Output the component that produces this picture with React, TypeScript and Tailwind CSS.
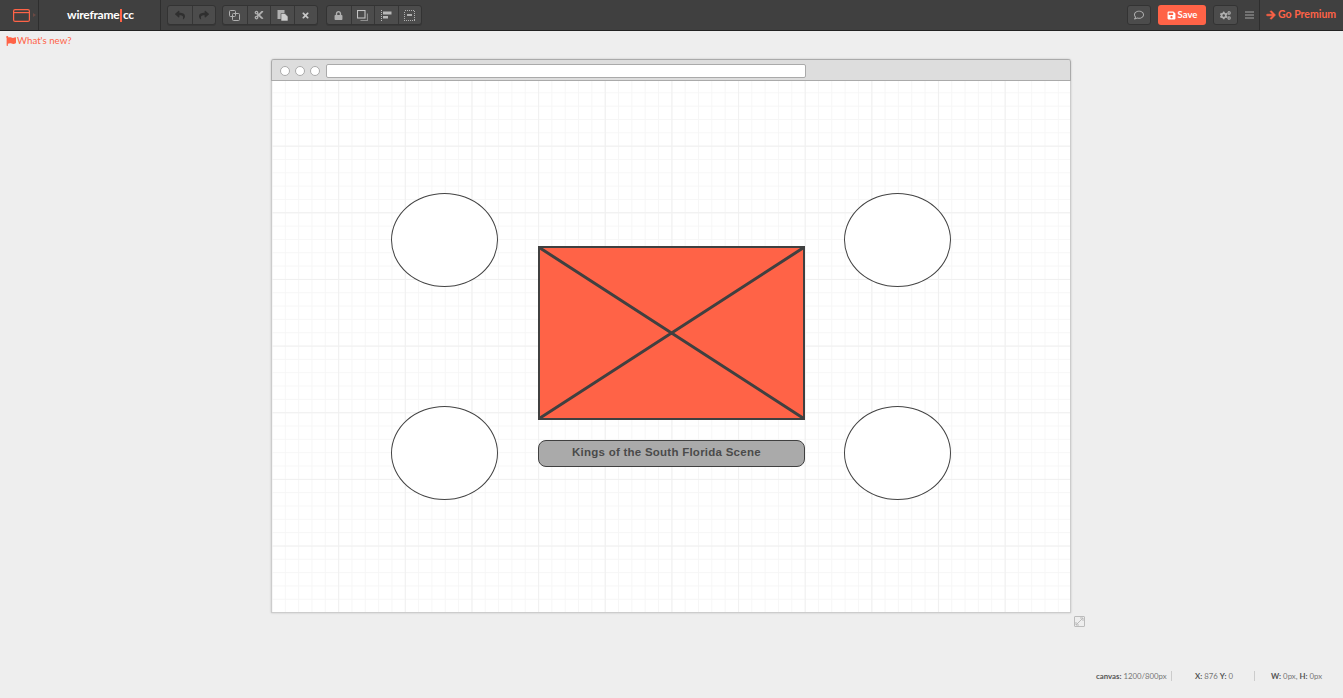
import { FaReply, FaShare, FaCut, FaTimes, FaLock, FaRegComment, FaSave, FaCogs, FaArrowRight, FaFlag } from "react-icons/fa";
import type { ReactNode } from "react";

function Group({ items }: { items: ReactNode[] }) {
  return (
    <div className="flex h-[20px] rounded-[3px] border border-[#333] bg-[#4c4c4c] shadow-[0_1px_0_#383838]">
      {items.map((it, i) => (
        <div key={i} className={"flex w-[23.5px] items-center justify-center text-[#b0b0b0] " + (i > 0 ? "border-l border-[#363636]" : "")}>
          {it}
        </div>
      ))}
    </div>
  );
}

function Copy() {
  return (
    <svg width="11" height="11" viewBox="0 0 11 11" fill="none" stroke="#b0b0b0" strokeWidth="1">
      <rect x="0.5" y="0.5" width="6" height="6" rx="1" />
      <rect x="3.5" y="3.5" width="7" height="7" rx="1" />
    </svg>
  );
}
function Paste() {
  return (
    <svg width="11" height="11" viewBox="0 0 11 11">
      <rect x="0.5" y="0" width="7" height="9" fill="#b0b0b0" />
      <path d="M4 3.5h4l3 3V11H4z" fill="#cfcfcf" stroke="#4c4c4c" strokeWidth="0.6" />
    </svg>
  );
}
function Forward() {
  return (
    <svg width="11" height="11" viewBox="0 0 11 11" fill="none">
      <rect x="0.5" y="0.5" width="7.5" height="7.5" stroke="#c4c4c4" strokeWidth="1.1" />
      <path d="M10.5 3.5v7h-7" stroke="#8f8f8f" strokeWidth="1.2" />
    </svg>
  );
}
function Align() {
  return (
    <svg width="11" height="11" viewBox="0 0 11 11" fill="#b8b8b8">
      <path d="M0.5 0v11" stroke="#b8b8b8" strokeDasharray="1 1" />
      <rect x="2" y="1.5" width="8.5" height="3" />
      <rect x="2" y="6" width="5" height="2.5" />
    </svg>
  );
}
function SelectIcon() {
  return (
    <svg width="11" height="11" viewBox="0 0 11 11" fill="none" shapeRendering="crispEdges">
      <rect x="0.5" y="0.5" width="10" height="10" stroke="#b0b0b0" strokeDasharray="1 1" />
      <rect x="3" y="4" width="5" height="2" fill="#b0b0b0" />
    </svg>
  );
}
function Burger() {
  return (
    <svg width="9" height="8" viewBox="0 0 9 8" stroke="#a5a5a5" strokeWidth="1">
      <path d="M0 1h9M0 4h9M0 7h9" />
    </svg>
  );
}
function WindowIcon() {
  return (
    <svg width="17" height="13" viewBox="0 0 17 13" fill="none" stroke="#ff6347" strokeWidth="1.2">
      <rect x="0.6" y="0.6" width="15.8" height="11.8" rx="1.5" />
      <path d="M1 3.6h15" />
    </svg>
  );
}
function Ellipse({ pos }: { pos: string }) {
  return <div className={"absolute h-[94px] w-[107px] rounded-[50%] border border-[#444] bg-white " + pos} />;
}
function Dot() {
  return <div className="h-[10px] w-[10px] rounded-full border border-[#aaa] bg-white" />;
}

export default function App() {
  return (
    <div className="flex h-[698px] w-[1343px] flex-col overflow-hidden bg-[#eee] font-['Lato','Open_Sans',sans-serif]">
      <header className="flex h-[31px] shrink-0 items-stretch border-b border-[#222] bg-[#404040]">
        <div className="flex w-[39px] items-center border-r border-[#2e2e2e] pl-[13px]">
          <WindowIcon />
          <span className="ml-[3px] h-0 w-0 border-y-[2px] border-l-[3px] border-y-transparent border-l-[#6b4a44]" />
        </div>
        <div className="flex w-[122px] items-center justify-center border-r border-[#2e2e2e] pl-[2px] text-[12px] font-bold tracking-[-0.25px] text-white">
          wireframe<span className="mx-px h-[13px] w-[1.5px] bg-[#ff6347]" />cc
        </div>
        <div className="flex items-center pl-[6px]">
          <Group items={[<FaReply key="a" size={10} color="#2f2f2f" />, <FaShare key="b" size={10} color="#2f2f2f" />]} />
          <div className="ml-[6px]">
            <Group items={[<Copy key="a" />, <FaCut key="b" size={10} />, <Paste key="c" />, <FaTimes key="d" size={9} color="#c8c8c8" />]} />
          </div>
          <div className="ml-[8px]">
            <Group items={[<FaLock key="a" size={9} />, <Forward key="b" />, <Align key="c" />, <SelectIcon key="d" />]} />
          </div>
        </div>
        <div className="ml-auto flex items-center">
          <div className="flex h-[20px] w-[24px] items-center justify-center rounded-[3px] border border-[#333] bg-[#4c4c4c] text-[#b0b0b0]">
            <FaRegComment size={10} />
          </div>
          <div className="ml-[7px] flex h-[20px] w-[48px] items-center justify-center gap-[2px] rounded-[3px] bg-[#ff6347] text-[9.5px] font-bold text-white">
            <FaSave size={9} />
            Save
          </div>
          <div className="ml-[7px] flex h-[20px] w-[25px] items-center justify-center rounded-[3px] border border-[#333] bg-[#4c4c4c] text-[#b0b0b0]">
            <FaCogs size={11} />
          </div>
          <div className="ml-[7px] flex w-[14px]">
            <Burger />
          </div>
        </div>
        <div className="flex w-[84px] items-center gap-[2px] border-l border-[#2e2e2e] pl-[6px] text-[10.5px] font-bold text-[#ff6347]">
          <FaArrowRight size={10} stroke="currentColor" strokeWidth={30} />
          Go Premium
        </div>
      </header>

      <div className="flex h-[20px] shrink-0 items-center gap-px pl-[6px] text-[9.7px] leading-none text-[#ff6347]">
        <FaFlag size={10} />
        What's new?
      </div>

      <div className="ml-[271px] mt-[8px] h-[554px] w-[800px] rounded-t-[3px] border border-[#ccc] border-t-[#aaa] bg-white shadow-[0_0_2px_#bbb]">
        <div className="-mx-px flex h-[21px] items-center gap-[5px] rounded-t-[2px] border-x border-b border-[#aaa] bg-[#ddd] pl-2 pt-[2px]">
          <Dot />
          <Dot />
          <Dot />
          <div className="ml-[1px] h-[14px] w-[480px] rounded-[2px] border border-[#aaa] bg-white" />
        </div>
        <div className="relative h-[531px] overflow-hidden bg-[linear-gradient(to_right,#f0f0f0_1px,transparent_1px),linear-gradient(to_bottom,#f0f0f0_1px,transparent_1px),linear-gradient(to_right,#f6f6f6_1px,transparent_1px),linear-gradient(to_bottom,#f6f6f6_1px,transparent_1px)] bg-size-[66.667px_66.667px,66.667px_66.667px,13.333px_13.333px,13.333px_13.333px] [background-position:-0.5px_-2px]">
          <Ellipse pos="left-[119px] top-[112px]" />
          <Ellipse pos="left-[572px] top-[112px]" />
          <Ellipse pos="left-[119px] top-[325px]" />
          <Ellipse pos="left-[572px] top-[325px]" />
          <div className="absolute left-[266px] top-[165px] h-[174px] w-[267px] border-2 border-[#404040] bg-[#ff6347]">
            <svg className="h-full w-full" viewBox="0 0 263 170" preserveAspectRatio="none" stroke="#404040" strokeWidth="3">
              <path d="M0 0L263 170M263 0L0 170" />
            </svg>
          </div>
          <div className="absolute left-[266px] top-[359px] flex h-[27px] w-[267px] items-center rounded-[8px] border border-[#404040] bg-[#aaa] pb-[2px] pl-[33px] font-['Liberation_Sans',sans-serif] text-[11.5px] font-bold tracking-[0.25px] text-[#4a4a4a]">
            Kings of the South Florida Scene
          </div>
        </div>
      </div>

      <div className="ml-[1074px] mt-[3px] flex h-[11px] w-[11px] items-center justify-center rounded-[1px] border border-[#bbb]">
        <svg width="9" height="9" viewBox="0 0 9 9" fill="none" stroke="#bbb" strokeWidth="1">
          <path d="M1 8L8 1M5 1h3v3M1 5v3h3" />
        </svg>
      </div>

      <div className="mt-[44px] flex items-center pl-[1096px] text-[7.8px] leading-[10px] text-[#777]">
        <div className="w-[76px] border-r border-[#ccc]"><span className="font-bold text-[#555]">canvas:</span> 1200/800px</div>
        <div className="w-[83px] border-r border-[#ccc] pl-[23px]"><span className="font-bold text-[#555]">X:</span> 876 <span className="font-bold text-[#555]">Y:</span> 0</div>
        <div className="pl-[16px]"><span className="font-bold text-[#555]">W:</span> 0px, <span className="font-bold text-[#555]">H:</span> 0px</div>
      </div>
    </div>
  );
}
